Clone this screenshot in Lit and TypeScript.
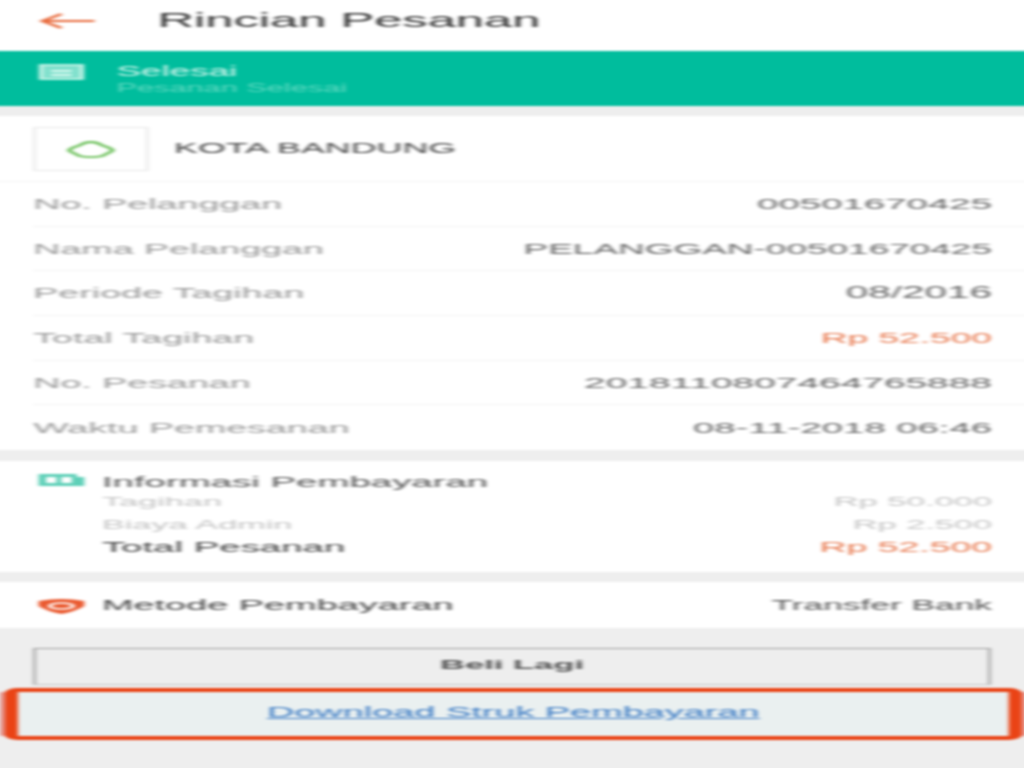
import { LitElement, html, css } from "lit";
import { customElement } from "lit/decorators.js";

const rows: [string, string, boolean, number][] = [
  ["No. Pelanggan", "00501670425", false, 15],
  ["Nama Pelanggan", "PELANGGAN-00501670425", false, 14.45],
  ["Periode Tagihan", "08/2016", false, 15.8],
  ["Total Tagihan", "Rp 52.500", true, 14.5],
  ["No. Pesanan", "2018110807464765888", false, 15.2],
  ["Waktu Pemesanan", "08-11-2018 06:46", false, 14.95],
];

@customElement("app-root")
export class AppRoot extends LitElement {
  static styles = css`
    :host { display: block; width: 1024px; height: 768px; overflow: hidden; background: #fff; }
    .stage {
      width: 404px; height: 776px; margin-left: -2px; transform: scaleX(2.56); transform-origin: 2px 0;
      filter: blur(0.85px); font-family: "Liberation Sans", Arial, sans-serif; background: #eeeeee;
      display: flex; flex-direction: column;
    }
    .header { height: 51px; flex: none; background: #fff; display: flex; align-items: center; box-sizing: border-box; padding: 0 0 10px 17px; }
    .back { width: 22px; height: 16px; flex: none; }
    .title { margin-left: 24.5px; font-size: 19.8px; color: #333; }
    .banner { height: 55px; flex: none; background: #00bd9d; display: flex; align-items: center; padding-left: 17px; }
    .banner svg { width: 18px; height: 18px; flex: none; margin-top: -14px; }
    .banner-text { margin-left: 12.5px; display: flex; flex-direction: column; margin-top: 3px; }
    .s1 { font-size: 14.4px; line-height: 17px; color: #d5f5ec; }
    .s2 { font-size: 12px; line-height: 17px; color: #5fd8c0; }
    .card { background: #fff; flex: none; }
    .top-card { margin-top: 10px; }
    .brand { height: 66px; display: flex; align-items: center; padding: 1px 0 0 15px; box-sizing: border-box; border-bottom: 1px solid #f2f2f2; }
    .logo { width: 45px; height: 44px; box-sizing: border-box; border: 1px solid #e8e8e8; display: flex; align-items: center; justify-content: center; }
    .logo svg { width: 19px; height: 23px; margin-top: 1px; }
    .city { margin-left: 10px; margin-top: -3px; font-size: 14px; color: #444; }
    .row { height: 44.7px; box-sizing: border-box; margin-left: 15px; padding-right: 14.5px; display: flex; justify-content: space-between; align-items: center; border-bottom: 1px solid #f2f2f2; }
    .row:last-child { border-bottom: none; }
    .lbl { color: #999; font-size: 14.7px; }
    .val { color: #666; }
    .price { color: #e87a50; }
    .pay { margin-top: 11px; height: 111px; padding: 10px 14.5px 0 17px; box-sizing: border-box; display: grid; grid-template-columns: 24.8px 1fr auto; grid-template-rows: 20px 21px 24px 21px; align-items: center; font-size: 15px; }
    .pay svg { width: 18px; height: 16px; }
    .pay > span:nth-child(3n) { justify-self: end; }
    .head { color: #555; }
    .faint { color: #c4c4c4; font-size: 13.4px; }
    .strong { color: #444; }
    .pay .price { font-size: 14.6px; }
    .method { margin-top: 10px; height: 46px; padding: 0 14.5px 0 17px; display: flex; align-items: center; font-size: 14.8px; box-sizing: border-box; }
    .method svg { width: 18px; height: 19px; flex: none; margin-right: 6.8px; }
    .method .grow { flex: 1; color: #444; }
    .method .val { color: #555; font-size: 13.8px; }
    .actions { padding: 20px 15px 0; }
    .buy { height: 37px; box-sizing: border-box; padding-bottom: 4px; border: 1px solid #a0a0a0; border-bottom-color: #c8c8c8; display: flex; align-items: center; justify-content: center; font-size: 13.5px; font-weight: bold; color: #555; }
    .download {
      margin: 3px -12px 0 -11px; height: 52px; box-sizing: border-box; padding-bottom: 4px; background: #eaf0f0;
      border: solid #ea4315; border-width: 4px 5.5px; border-radius: 5px;
      box-shadow: -6px 0 0 -4px #e58f85, 6px 0 0 -4px #e58f85;
      display: flex; align-items: center; justify-content: center;
      font-size: 14.8px; color: #3a7ac4; text-decoration: underline;
    }
  `;

  render() {
    return html`<div class="stage">
      <div class="header">
        <svg class="back" viewBox="0 0 22 16" fill="none" stroke="#e86a3c" stroke-width="1.8"><path d="M1 8H22M9 1 1.5 8 9 15"/></svg>
        <span class="title">Rincian Pesanan</span>
      </div>
      <div class="banner">
        <svg viewBox="0 0 18 18" fill="#7fe0cc" stroke="#c4f2e6" stroke-width="1.8"><rect x="1" y="2" width="16" height="14"/><path d="M5 8h8M5 12h8" stroke="#d8f8ef"/></svg>
        <div class="banner-text"><span class="s1">Selesai</span><span class="s2">Pesanan Selesai</span></div>
      </div>
      <div class="card top-card">
        <div class="brand">
          <div class="logo"><svg viewBox="0 0 19 23" fill="none" stroke="#6cc05a" stroke-width="1.8"><path d="M9.5 4C12 4 13 6 14 7.500 16 9 18 11 18 12.500 17 15 15 16 14 18 11 19.500 8 19.500 5 18 4 16 2 15 1 12.500 1 11 3 9 5 7.500 6 6 7 4 9.500 4Z"/></svg></div>
          <span class="city">KOTA BANDUNG</span>
        </div>
        ${rows.map(([l, v, p, size]) => html`<div class="row"><span class="lbl">${l}</span><span class="${p ? "price" : "val"}" style="font-size:${size}px">${v}</span></div>`)}
      </div>
      <div class="card pay">
        <svg viewBox="0 0 18 16"><path fill="#5fd0b8" d="M0 1h15v3h3v9H0z"/><rect x="3" y="4" width="4" height="6" fill="#fff"/><rect x="9" y="4" width="4" height="6" fill="#fff"/></svg>
        <span class="head">Informasi Pembayaran</span><span></span>
        <span></span><span class="faint">Tagihan</span><span class="faint">Rp 50.000</span>
        <span></span><span class="faint">Biaya Admin</span><span class="faint">Rp 2.500</span>
        <span></span><span class="strong">Total Pesanan</span><span class="price">Rp 52.500</span>
      </div>
      <div class="card method">
        <svg viewBox="0 0 18 19"><path fill="#ea5a30" d="M0 5Q9 1 18 5V10Q15 15 9 18 3 15 0 10Z"/><ellipse cx="9" cy="10" rx="4.500" ry="3" fill="none" stroke="#fff" stroke-width="1.600"/></svg>
        <span class="grow">Metode Pembayaran</span><span class="val">Transfer Bank</span>
      </div>
      <div class="actions">
        <div class="buy">Beli Lagi</div>
        <div class="download">Download Struk Pembayaran</div>
      </div>
    </div>`;
  }
}
